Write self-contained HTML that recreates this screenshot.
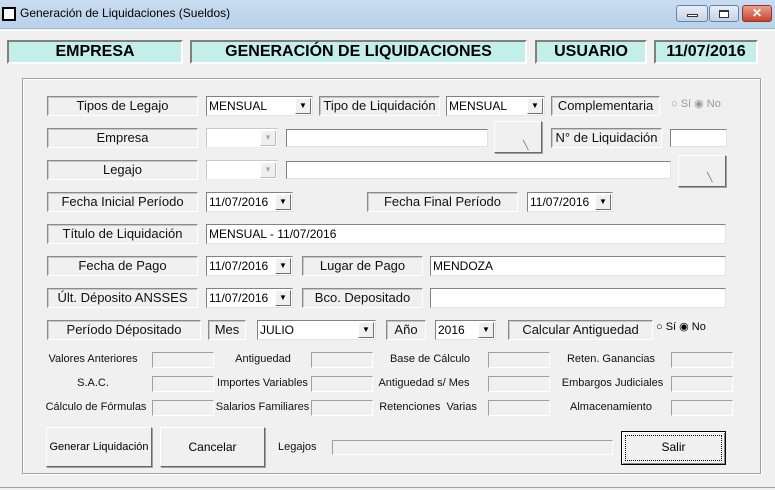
<!DOCTYPE html>
<html><head><meta charset="utf-8"><style>
*{box-sizing:border-box;margin:0;padding:0}
body{width:775px;height:490px;overflow:hidden;background:#f0f0f0;font-family:"Liberation Sans",sans-serif;position:relative}
div{position:absolute;white-space:nowrap}
.tb{left:0;top:0;width:775px;height:29px;background:linear-gradient(#c9dcf1,#b9d1ea);border-bottom:1px solid #a0b4cc}
.h{background:#c4eeea;border:2px solid;border-color:#7f7f7f #fff #fff #7f7f7f;font-weight:bold;font-size:16px;text-align:center;line-height:20px;top:40px;height:24px}
.l{border:1px solid;border-color:#8a8a8a #fff #fff #8a8a8a;box-shadow:inset 1px 1px 0 #c8c8c8;font-size:13px;text-align:center;line-height:18px;height:20px;color:#111}
.i{background:#fff;border:1px solid;border-color:#828282 #e3e3e3 #e3e3e3 #828282;font-size:12px;line-height:18px;height:20px;padding-left:2px;color:#000}
.d{background:#fff;border:1px solid;border-color:#c8c8c8 #ececec #ececec #c8c8c8;height:20px}
.a{right:1px;top:1px;width:16px;height:16px;background:#f0f0f0;border:1px solid;border-color:#fff #707070 #707070 #fff;font-size:8px;line-height:14px;text-align:center;color:#000}
.d .a{color:#aaa;border-color:#fff #bbb #bbb #fff}
.s{font-size:11px;text-align:center;line-height:14px;color:#111}
.b{border:1px solid;border-color:#fff #6a6a6a #6a6a6a #fff;box-shadow:1px 1px 0 #a0a0a0;background:#f0f0f0;font-size:12px;text-align:center}
.sb{background:#f0f0f0;border:1px solid;border-color:#a0a0a0 #fff #fff #a0a0a0;height:16px}
.r{font-size:11px;color:#999}
</style></head><body>
<div class="tb"></div>
<div style="left:2px;top:7px;width:14px;height:14px;border:2px solid #000;background:#fff"></div>
<div style="left:20px;top:6px;font-size:12px;color:#000">Generación de Liquidaciones (Sueldos)</div>
<div style="left:676px;top:5px;width:32px;height:17px;border:1px solid #6d82a0;border-radius:3px;background:linear-gradient(#e8eef7,#c4d3e6)"><div style="left:10px;top:8px;width:11px;height:3px;border:1px solid #333;background:#fff"></div></div>
<div style="left:709px;top:5px;width:30px;height:17px;border:1px solid #6d82a0;border-radius:3px;background:linear-gradient(#e8eef7,#c4d3e6)"><div style="left:9px;top:4px;width:10px;height:8px;border:1px solid #333;border-top-width:2px;background:#fff"></div></div>
<div style="left:742px;top:5px;width:30px;height:17px;border:1px solid #8b3a2a;border-radius:3px;background:linear-gradient(#e8a08f,#c8432c);color:#fff;font-weight:bold;font-size:12px;text-align:center;line-height:15px">✕</div>
<div style="left:0;top:30px;width:775px;height:460px;border-top:1px solid #fff"></div>
<div style="left:0;top:487px;width:775px;height:3px;border-top:1px solid #a0a0a0"></div>

<div class="h" style="left:7px;width:176px">EMPRESA</div>
<div class="h" style="left:190px;width:337px">GENERACIÓN DE LIQUIDACIONES</div>
<div class="h" style="left:535px;width:112px">USUARIO</div>
<div class="h" style="left:654px;width:104px">11/07/2016</div>

<div style="left:22px;top:78px;width:739px;height:396px;border:1px solid #a0a0a0;box-shadow:inset 1px 1px 0 #fff,1px 1px 0 #fff"></div>

<div class="l" style="left:47px;top:96px;width:151px">Tipos de Legajo</div>
<div class="i" style="left:206px;top:96px;width:107px">MENSUAL<div class="a">▼</div></div>
<div class="l" style="left:319px;top:96px;width:121px">Tipo de Liquidación</div>
<div class="i" style="left:446px;top:96px;width:99px">MENSUAL<div class="a">▼</div></div>
<div class="l" style="left:551px;top:96px;width:109px">Complementaria</div>
<div class="r" style="left:671px;top:97px">○ Sí ◉ No</div>

<div class="l" style="left:47px;top:128px;width:151px">Empresa</div>
<div class="d" style="left:206px;top:128px;width:72px"><div class="a">▼</div></div>
<div class="i" style="left:286px;top:129px;width:202px;height:18px"></div>
<div class="b" style="left:494px;top:121px;width:48px;height:32px"><div style="left:28px;top:18px;font-size:9px;color:#666">╲</div></div>
<div class="l" style="left:551px;top:128px;width:111px">N° de Liquidación</div>
<div class="i" style="left:670px;top:129px;width:57px;height:18px"></div>

<div class="l" style="left:47px;top:160px;width:151px">Legajo</div>
<div class="d" style="left:206px;top:160px;width:72px"><div class="a">▼</div></div>
<div class="i" style="left:286px;top:161px;width:385px;height:18px"></div>
<div class="b" style="left:678px;top:155px;width:48px;height:32px"><div style="left:28px;top:16px;font-size:9px;color:#666">╲</div></div>

<div class="l" style="left:47px;top:192px;width:151px">Fecha Inicial Período</div>
<div class="i" style="left:206px;top:192px;width:87px">11/07/2016<div class="a">▼</div></div>
<div class="l" style="left:367px;top:192px;width:151px">Fecha Final Período</div>
<div class="i" style="left:527px;top:192px;width:86px">11/07/2016<div class="a">▼</div></div>

<div class="l" style="left:47px;top:224px;width:151px">Título de Liquidación</div>
<div class="i" style="left:206px;top:224px;width:520px">MENSUAL - 11/07/2016</div>

<div class="l" style="left:47px;top:256px;width:151px">Fecha de Pago</div>
<div class="i" style="left:206px;top:256px;width:87px">11/07/2016<div class="a">▼</div></div>
<div class="l" style="left:302px;top:256px;width:121px">Lugar de Pago</div>
<div class="i" style="left:430px;top:256px;width:296px">MENDOZA</div>

<div class="l" style="left:47px;top:288px;width:151px">Últ. Déposito ANSSES</div>
<div class="i" style="left:206px;top:288px;width:87px">11/07/2016<div class="a">▼</div></div>
<div class="l" style="left:302px;top:288px;width:121px">Bco. Depositado</div>
<div class="i" style="left:430px;top:288px;width:296px"></div>

<div class="l" style="left:47px;top:320px;width:154px">Período Dépositado</div>
<div class="l" style="left:208px;top:320px;width:38px">Mes</div>
<div class="i" style="left:257px;top:320px;width:119px">JULIO<div class="a">▼</div></div>
<div class="l" style="left:386px;top:320px;width:40px">Año</div>
<div class="i" style="left:435px;top:320px;width:61px">2016<div class="a">▼</div></div>
<div class="l" style="left:508px;top:320px;width:145px">Calcular Antiguedad</div>
<div style="left:656px;top:320px;font-size:11px;color:#000">○ Sí ◉ No</div>

<div class="s" style="left:40px;top:352px;width:106px">Valores Anteriores</div>
<div class="sb" style="left:152px;top:352px;width:62px"></div>
<div class="s" style="left:215px;top:352px;width:96px">Antiguedad</div>
<div class="sb" style="left:311px;top:352px;width:62px"></div>
<div class="s" style="left:375px;top:352px;width:110px">Base de Cálculo</div>
<div class="sb" style="left:488px;top:352px;width:62px"></div>
<div class="s" style="left:556px;top:352px;width:110px">Reten. Ganancias</div>
<div class="sb" style="left:671px;top:352px;width:62px"></div>

<div class="s" style="left:40px;top:376px;width:106px">S.A.C.</div>
<div class="sb" style="left:152px;top:376px;width:62px"></div>
<div class="s" style="left:214px;top:376px;width:97px">Importes Variables</div>
<div class="sb" style="left:311px;top:376px;width:62px"></div>
<div class="s" style="left:374px;top:376px;width:100px">Antiguedad s/ Mes</div>
<div class="sb" style="left:488px;top:376px;width:62px"></div>
<div class="s" style="left:556px;top:376px;width:113px">Embargos Judiciales</div>
<div class="sb" style="left:671px;top:376px;width:62px"></div>

<div class="s" style="left:44px;top:400px;width:104px">Cálculo de Fórmulas</div>
<div class="sb" style="left:152px;top:400px;width:62px"></div>
<div class="s" style="left:214px;top:400px;width:97px">Salarios Familiares</div>
<div class="sb" style="left:311px;top:400px;width:62px"></div>
<div class="s" style="left:374px;top:400px;width:108px">Retenciones&nbsp; Varias</div>
<div class="sb" style="left:488px;top:400px;width:62px"></div>
<div class="s" style="left:556px;top:400px;width:110px">Almacenamiento</div>
<div class="sb" style="left:671px;top:400px;width:62px"></div>

<div class="b" style="left:46px;top:427px;width:106px;height:40px;line-height:38px;font-size:11px">Generar Liquidación</div>
<div class="b" style="left:160px;top:427px;width:105px;height:40px;line-height:38px">Cancelar</div>
<div class="s" style="left:278px;top:440px;font-size:11px">Legajos</div>
<div class="sb" style="left:332px;top:440px;width:281px;height:15px"></div>
<div class="b" style="left:621px;top:431px;width:105px;height:34px;line-height:30px;border:1px solid #000;box-shadow:inset 1px 1px 0 #fff,inset -1px -1px 0 #888"><div style="left:3px;top:3px;right:3px;bottom:3px;border:1px dotted #000"></div>Salir</div>
</body></html>
